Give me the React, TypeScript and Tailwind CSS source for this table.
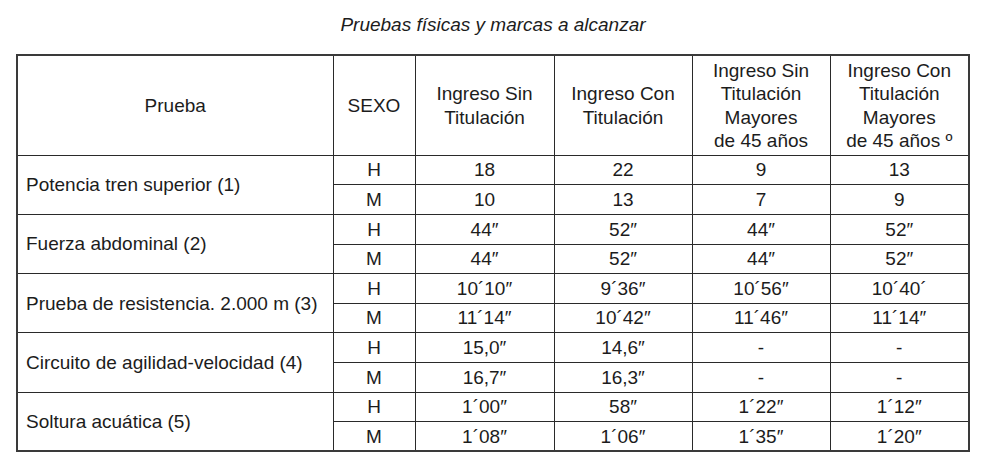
const S = "″";
const groups = [
  {
    name: "Potencia tren superior (1)",
    rows: [
      ["H", "18", "22", "9", "13"],
      ["M", "10", "13", "7", "9"],
    ],
  },
  {
    name: "Fuerza abdominal (2)",
    rows: [
      ["H", `44${S}`, `52${S}`, `44${S}`, `52${S}`],
      ["M", `44${S}`, `52${S}`, `44${S}`, `52${S}`],
    ],
  },
  {
    name: "Prueba de resistencia. 2.000 m (3)",
    rows: [
      ["H", `10´10${S}`, `9´36${S}`, `10´56${S}`, "10´40´"],
      ["M", `11´14${S}`, `10´42${S}`, `11´46${S}`, `11´14${S}`],
    ],
  },
  {
    name: "Circuito de agilidad-velocidad (4)",
    rows: [
      ["H", `15,0${S}`, `14,6${S}`, "-", "-"],
      ["M", `16,7${S}`, `16,3${S}`, "-", "-"],
    ],
  },
  {
    name: "Soltura acuática (5)",
    rows: [
      ["H", `1´00${S}`, `58${S}`, `1´22${S}`, `1´12${S}`],
      ["M", `1´08${S}`, `1´06${S}`, `1´35${S}`, `1´20${S}`],
    ],
  },
];

const base = "border border-[#2a2a2a] align-middle p-0 text-[19px] leading-[23.3px] font-normal text-[#1c1c1c] font-['Liberation_Sans',Arial,sans-serif]";
const cell = `${base} text-center`;

export default function App() {
  return (
    <div className="w-[986px] h-[462px] bg-white text-[#1c1c1c] font-['Liberation_Sans',Arial,sans-serif] text-[19px] leading-[23.3px]">
      <p className="pt-[13px] text-center italic">Pruebas físicas y marcas a alcanzar</p>
      <table className="ml-[16px] mt-[18px] w-[952px] table-fixed border-collapse border-2 border-[#3a3a3a]">
        <colgroup>
          <col className="w-[316px]" />
          <col className="w-[82px]" />
          <col className="w-[139px]" />
          <col className="w-[138px]" />
          <col className="w-[138px]" />
          <col className="w-[139px]" />
        </colgroup>
        <thead>
          <tr className="h-[100px]">
            <th className={cell}>Prueba</th>
            <th className={cell}>SEXO</th>
            <th className={cell}>
              Ingreso Sin
              <br />
              Titulación
            </th>
            <th className={cell}>
              Ingreso Con
              <br />
              Titulación
            </th>
            <th className={cell}>
              Ingreso Sin
              <br />
              Titulación
              <br />
              Mayores
              <br />
              de 45 años
            </th>
            <th className={cell}>
              Ingreso Con
              <br />
              Titulación
              <br />
              Mayores
              <br />
              de 45 años º
            </th>
          </tr>
        </thead>
        <tbody>
          {groups.map((g) =>
            g.rows.map((r, i) => (
              <tr key={g.name + i} className="h-[29.6px]">
                {i === 0 && (
                  <td rowSpan={2} className={`${base} pl-[8px] text-left`}>
                    {g.name}
                  </td>
                )}
                {r.map((v, j) => (
                  <td key={j} className={cell}>
                    {v}
                  </td>
                ))}
              </tr>
            ))
          )}
        </tbody>
      </table>
    </div>
  );
}
